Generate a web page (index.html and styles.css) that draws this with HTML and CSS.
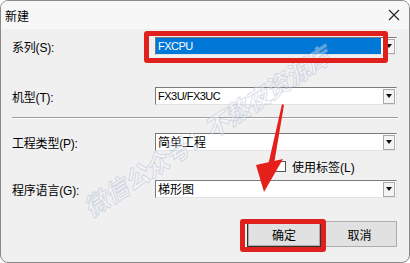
FILE: index.html
```html
<!DOCTYPE html>
<html lang="zh-CN">
<head>
    <meta charset="UTF-8">
    <title>新建</title>
    <link rel="stylesheet" href="styles.css">
</head>
<body>
    <div class="window">
        <div class="titlebar">
            <span class="title">新建</span>
            <svg class="close" width="12" height="12" viewBox="0 0 12 12">
                <path d="M1 1 L11 11 M11 1 L1 11" stroke="#222" stroke-width="1.1" fill="none"/>
            </svg>
        </div>

        <div class="content">
            <div class="row row-series">
                <span class="label">系列(S):</span>
                <div class="combo">
                    <span class="value selected">FXCPU</span>
                    <span class="drop"></span>
                </div>
            </div>

            <div class="row row-model">
                <span class="label">机型(T):</span>
                <div class="combo">
                    <span class="value">FX3U/FX3UC</span>
                    <span class="drop"></span>
                </div>
            </div>

            <div class="separator"></div>

            <div class="row row-type">
                <span class="label">工程类型(P):</span>
                <div class="combo">
                    <span class="value cjk">简单工程</span>
                    <span class="drop"></span>
                </div>
            </div>

            <div class="check-row">
                <span class="checkbox"></span>
                <span class="check-label">使用标签(L)</span>
            </div>

            <div class="row row-lang">
                <span class="label">程序语言(G):</span>
                <div class="combo">
                    <span class="value cjk">梯形图</span>
                    <span class="drop"></span>
                </div>
            </div>

            <div class="buttons">
                <button class="btn btn-default">确定</button>
                <button class="btn">取消</button>
            </div>
        </div>

        <!-- annotations drawn over the dialog -->
        <div class="watermark">微信公众号：不熬夜资源库</div>
        <div class="highlight hl-series"></div>
        <div class="highlight hl-ok"></div>
        <svg class="arrow" width="410" height="263" viewBox="0 0 410 263">
            <polygon points="282,104 284,105 273,170 267,170" fill="#e5201b"/>
            <polygon points="256,165 283,159 264,192" fill="#e5201b"/>
        </svg>
    </div>
</body>
</html>
```

FILE: styles.css
```css
/* Page Setup */
html, body {
    margin: 0;
    padding: 0;
    width: 410px;
    height: 263px;
    overflow: hidden;
    background: #ffffff;
    font-family: "Liberation Sans", "Noto Sans CJK SC", sans-serif;
    color: #000;
}

/* Dialog Window */
.window {
    position: relative;
    width: 410px;
    height: 263px;
    box-sizing: border-box;
    border: 1px solid #8a8a8a;
    border-radius: 8px;
    background: #f0f0f0;
    overflow: hidden;
}

.titlebar {
    height: 28px;
    display: flex;
    align-items: center;
    justify-content: space-between;
    padding: 0 9px 0 4px;
    background: #f7f7f7;
}

.title {
    font-size: 12px;
    font-family: "Noto Sans CJK SC", sans-serif;
}

/* Form */
.content {
    padding: 0 12px 0 11px;
}

.row {
    display: flex;
    align-items: center;
    height: 18px;
}

.row-series { margin-top: 8px; }
.row-model { margin-top: 32px; }
.row-type { margin-top: 14px; }
.row-lang { margin-top: 8px; }

.label {
    width: 143px;
    font-size: 12px;
    letter-spacing: -0.2px;
}

.combo {
    flex: 1;
    height: 18px;
    box-sizing: border-box;
    display: flex;
    align-items: center;
    background: #ffffff;
    border-top: 1px solid #7a7a7a;
    border-left: 1px solid #7a7a7a;
    border-right: 1px solid #e3e3e3;
    border-bottom: 1px solid #e3e3e3;
}

.value {
    flex: 1;
    padding-left: 2px;
    font-size: 11px;
    letter-spacing: -0.5px;
    line-height: 16px;
}

.value.cjk {
    font-family: "Noto Sans CJK SC", sans-serif;
    font-size: 12px;
    letter-spacing: 0;
}

.value.selected {
    background: #0078d7;
    color: #ffffff;
    margin-right: 2px;
}

.drop {
    width: 12px;
    height: 15px;
    margin-right: 1px;
    box-sizing: border-box;
    border: 1px solid #a8a8a8;
    background: #f4f4f4;
    display: flex;
    align-items: center;
    justify-content: center;
}

.drop::after {
    content: "";
    border-left: 3.5px solid transparent;
    border-right: 3.5px solid transparent;
    border-top: 4px solid #111;
}

.separator {
    margin-top: 12px;
    height: 1px;
    background: #a0a0a0;
    border-bottom: 1px solid #ffffff;
    margin-right: -1px;
}

.check-row {
    display: flex;
    align-items: center;
    margin-top: 10px;
    height: 11px;
    padding-left: 263px;
}

.checkbox {
    width: 11px;
    height: 11px;
    box-sizing: border-box;
    border: 1px solid #555;
    background: #ffffff;
}

.check-label {
    margin-left: 6px;
    font-size: 12px;
}

/* Buttons */
.buttons {
    display: flex;
    justify-content: flex-end;
    margin-top: 23px;
}

.btn {
    width: 75px;
    height: 26px;
    margin: 0;
    padding: 0;
    font-family: "Noto Sans CJK SC", sans-serif;
    font-size: 12px;
    background: #e1e1e1;
    border: 1px solid #adadad;
    border-radius: 0;
}

.btn-default {
    width: 74px;
    margin-right: 1px;
    border: 1px solid #333;
    box-shadow: inset 0 0 0 1px #adadad;
}

/* Annotations */
.highlight {
    position: absolute;
    border: 5px solid #e0201c;
    border-radius: 3px;
    box-sizing: border-box;
}

.hl-series {
    left: 143px;
    top: 30px;
    width: 244px;
    height: 32px;
}

.hl-ok {
    left: 239px;
    top: 218px;
    width: 86px;
    height: 33px;
}

.arrow {
    position: absolute;
    left: -1px;
    top: -1px;
}

.watermark {
    position: absolute;
    left: 45px;
    top: 112px;
    width: 320px;
    text-align: center;
    transform: rotate(-33deg);
    font-family: "Noto Sans CJK SC", sans-serif;
    font-size: 24px;
    font-weight: bold;
    font-style: italic;
    color: rgba(255, 255, 255, 0.35);
    -webkit-text-stroke: 1px rgba(160, 175, 205, 0.4);
    white-space: nowrap;
}
```
